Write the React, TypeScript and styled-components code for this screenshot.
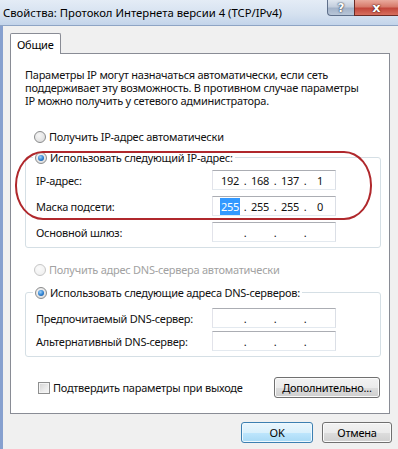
import React from 'react';
import styled, { createGlobalStyle } from 'styled-components';

const ipRows = [
  { label: 'IP-адрес:', value: ['192', '168', '137', '1'], selected: -1 },
  { label: 'Маска подсети:', value: ['255', '255', '255', '0'], selected: 0 },
  { label: 'Основной шлюз:', value: ['', '', '', ''], selected: -1 },
];

const dnsRows = [
  { label: 'Предпочитаемый DNS-сервер:', value: ['', '', '', ''], selected: -1 },
  { label: 'Альтернативный DNS-сервер:', value: ['', '', '', ''], selected: -1 },
];

const IpField = ({ value, selected }: { value: string[]; selected: number }) => (
  <IpBox>
    {value.map((part, i) => (
      <React.Fragment key={i}>
        <Octet>{i === selected ? <Selected>{part}</Selected> : part}</Octet>
        {i < 3 && <Dot>.</Dot>}
      </React.Fragment>
    ))}
  </IpBox>
);

const App = () => {
  return (
    <>
      <GlobalStyle />
      <Window>
        <TitleBar>
          <Title>Свойства: Протокол Интернета версии 4 (TCP/IPv4)</Title>
          <Controls>
            <HelpButton>?</HelpButton>
            <CloseButton>x</CloseButton>
          </Controls>
        </TitleBar>
        <Client>
          <TabStrip>
            <Tab>Общие</Tab>
            <TabFill />
          </TabStrip>
          <Panel>
            <Intro>
              Параметры IP могут назначаться автоматически, если сеть
              <br />
              поддерживает эту возможность. В противном случае параметры
              <br />
              IP можно получить у сетевого администратора.
            </Intro>

            <OptionRow $top={22}>
              <Radio />
              <span>Получить IP-адрес автоматически</span>
            </OptionRow>

            <Group $top={6}>
              <Legend>
                <LegendInner>
                  <Radio $checked />
                  <span>Использовать следующий IP-адрес:</span>
                </LegendInner>
              </Legend>
              <Rows $gap={6} $padTop={5}>
                {ipRows.map((row) => (
                  <FieldRow key={row.label}>
                    <FieldLabel>{row.label}</FieldLabel>
                    <IpField value={row.value} selected={row.selected} />
                  </FieldRow>
                ))}
              </Rows>
            </Group>

            <OptionRow $top={14} $disabled>
              <Radio $disabled />
              <span>Получить адрес DNS-сервера автоматически</span>
            </OptionRow>

            <Group $top={8}>
              <Legend>
                <LegendInner>
                  <Radio $checked />
                  <span>Использовать следующие адреса DNS-серверов:</span>
                </LegendInner>
              </Legend>
              <Rows $gap={3} $padTop={8}>
                {dnsRows.map((row) => (
                  <FieldRow key={row.label}>
                    <FieldLabel>{row.label}</FieldLabel>
                    <IpField value={row.value} selected={row.selected} />
                  </FieldRow>
                ))}
              </Rows>
            </Group>

            <BottomRow>
              <CheckRow>
                <Checkbox />
                <span>Подтвердить параметры при выходе</span>
              </CheckRow>
              <Button $width={106}>Дополнительно...</Button>
            </BottomRow>

            <Highlight />
          </Panel>
          <Footer>
            <Button $width={72} $primary>OK</Button>
            <Button $width={70}>Отмена</Button>
          </Footer>
        </Client>
      </Window>
    </>
  );
};

export default App;

// ========== Styled Components ==========

const GlobalStyle = createGlobalStyle`
  body {
    margin: 0;
    background: #f0f0f0;
    font-family: "Noto Sans", "Liberation Sans", sans-serif;
    font-size: 11px;
    letter-spacing: -0.25px;
    color: #111;
  }
`;

const Window = styled.div`
  width: 398px;
  height: 449px;
  overflow: hidden;
  display: flex;
  flex-direction: column;
  background: #f0f0f0;
`;

const TitleBar = styled.div`
  height: 25px;
  flex-shrink: 0;
  display: flex;
  align-items: flex-start;
  background: linear-gradient(180deg, #e4ecf6 0%, #d6e2f0 55%, #c3d4ea 100%);
  border-bottom: 1px solid #8ea4c4;
`;

const Title = styled.div`
  padding: 5px 0 0 3px;
  line-height: 16px;
  font-size: 11.3px;
  letter-spacing: 0;
  color: #000;
  white-space: nowrap;
`;

const Controls = styled.div`
  margin-left: auto;
  display: flex;
`;

const CaptionButton = styled.div`
  height: 16px;
  box-sizing: border-box;
  display: flex;
  align-items: center;
  justify-content: center;
  color: #fff;
  font-family: "DejaVu Sans", sans-serif;
  font-weight: bold;
  font-size: 12px;
  letter-spacing: 0;
  text-shadow: 0 0 2px #2a3448, 0 0 1px #2a3448;
`;

const HelpButton = styled(CaptionButton)`
  width: 27px;
  border: 1px solid #5e6f8a;
  border-top: none;
  border-right: none;
  border-radius: 0 0 0 4px;
  background: linear-gradient(180deg, #dfe6ef 0%, #c3cedd 45%, #a3b3c9 55%, #b8c6d8 100%);
`;

const CloseButton = styled(CaptionButton)`
  width: 44px;
  border: 1px solid #6a2b25;
  border-top: none;
  border-right: none;
  font-size: 13px;
  background: linear-gradient(180deg, #e9aa9d 0%, #d77a6b 45%, #c2463a 55%, #d7705f 100%);
  text-shadow: 0 0 2px #4a120c, 0 0 1px #4a120c;
`;

const Client = styled.div`
  flex: 1;
  display: flex;
  flex-direction: column;
  border-left: 3px solid #86a0cf;
  padding: 7px 8px 0 7px;
`;

const TabStrip = styled.div`
  display: flex;
  height: 21px;
`;

const Tab = styled.div`
  width: 51px;
  box-sizing: border-box;
  padding: 3px 0 0 6px;
  background: #fff;
  border: 1px solid #898c95;
  border-bottom: none;
  border-radius: 2px 2px 0 0;
  color: #000;
`;

const TabFill = styled.div`
  flex: 1;
  border-bottom: 1px solid #898c95;
`;

const Panel = styled.div`
  position: relative;
  display: flex;
  flex-direction: column;
  background: #fff;
  border: 1px solid #898c95;
  border-top: none;
  padding: 14px 8px 15px 14px;
`;

const Intro = styled.p`
  margin: 0;
  line-height: 13px;
  white-space: nowrap;
`;

const OptionRow = styled.div<{ $top: number; $disabled?: boolean }>`
  display: flex;
  align-items: center;
  gap: 3px;
  height: 15px;
  margin-top: ${(p) => p.$top}px;
  padding-left: 9px;
  color: ${(p) => (p.$disabled ? '#a2a2a2' : 'inherit')};
`;

const Radio = styled.span<{ $checked?: boolean; $disabled?: boolean }>`
  width: 12px;
  height: 12px;
  flex-shrink: 0;
  box-sizing: border-box;
  border-radius: 50%;
  display: flex;
  align-items: center;
  justify-content: center;
  border: 1px solid ${(p) => (p.$disabled ? '#c6c6c6' : '#8a8b8c')};
  background: ${(p) =>
    p.$disabled
      ? 'radial-gradient(circle at 40% 35%, #fbfbfb 0%, #ededed 100%)'
      : 'radial-gradient(circle at 40% 35%, #f6f6f6 0%, #d8d8d8 100%)'};

  &::after {
    content: '';
    display: ${(p) => (p.$checked ? 'block' : 'none')};
    width: 6px;
    height: 6px;
    border-radius: 50%;
    background: radial-gradient(circle at 40% 35%, #9fd2fa 0%, #2b7fd0 55%, #11488e 100%);
  }
`;

const Group = styled.fieldset<{ $top: number }>`
  margin: ${(p) => p.$top}px 0 0 0;
  padding: 0 10px 5px 10px;
  border: 1px solid #d5dfe5;
  border-radius: 3px;
  min-inline-size: 0;
`;

const Legend = styled.legend`
  padding: 0 2px;
  margin-left: -3px;
`;

const LegendInner = styled.span`
  display: flex;
  align-items: center;
  gap: 3px;
  height: 15px;
`;

const Rows = styled.div<{ $gap: number; $padTop: number }>`
  display: flex;
  flex-direction: column;
  gap: ${(p) => p.$gap}px;
  padding-top: ${(p) => p.$padTop}px;
`;

const FieldRow = styled.div`
  display: flex;
  align-items: center;
  height: 20px;
`;

const FieldLabel = styled.span`
  width: 176px;
  flex-shrink: 0;
`;

const IpBox = styled.div`
  width: 124px;
  height: 20px;
  box-sizing: border-box;
  display: flex;
  align-items: center;
  padding-left: 5px;
  background: #fff;
  border: 1px solid;
  border-color: #abadb3 #dbdfe6 #e3e9ef #e2e3ea;
`;

const Octet = styled.span`
  width: 24px;
  text-align: center;
`;

const Dot = styled.span`
  width: 6px;
  text-align: center;
`;

const Selected = styled.span`
  background: #3399ff;
  color: #fff;
  padding: 1px 1px;
`;

const BottomRow = styled.div`
  display: flex;
  align-items: center;
  justify-content: space-between;
  margin-top: 20px;
  padding-right: 1px;
`;

const CheckRow = styled.div`
  display: flex;
  align-items: center;
  gap: 3px;
  padding-left: 13px;
`;

const Checkbox = styled.span`
  width: 12px;
  height: 12px;
  box-sizing: border-box;
  border: 1px solid #8e8f8f;
  background: linear-gradient(135deg, #d2d2d2 0%, #ececec 60%, #f6f6f6 100%);
  box-shadow: inset 0 0 0 1px #f4f4f4;
`;

const Button = styled.div<{ $width: number; $primary?: boolean }>`
  width: ${(p) => p.$width}px;
  height: 21px;
  box-sizing: border-box;
  display: flex;
  align-items: center;
  justify-content: center;
  border-radius: 3px;
  color: #000;
  border: 1px solid ${(p) => (p.$primary ? '#3c7fb1' : '#707070')};
  box-shadow: inset 0 0 0 1px ${(p) => (p.$primary ? '#eef8fe' : '#fbfbfb')};
  background: ${(p) =>
    p.$primary
      ? 'linear-gradient(180deg, #eaf6fd 0%, #d9f0fc 50%, #bee6fd 51%, #a7d9f5 100%)'
      : 'linear-gradient(180deg, #f2f2f2 0%, #ebebeb 50%, #dddddd 51%, #cfcfcf 100%)'};
`;

const Footer = styled.div`
  display: flex;
  justify-content: flex-end;
  gap: 9px;
  padding-top: 8px;
  margin-right: -2px;
`;

/* red hand-drawn marker around the IP and mask rows */
const Highlight = styled.div`
  position: absolute;
  left: 4px;
  top: 97px;
  width: 357px;
  height: 69px;
  box-sizing: border-box;
  border: 2px solid #b0282c;
  border-radius: 28px / 34px;
  pointer-events: none;
`;
